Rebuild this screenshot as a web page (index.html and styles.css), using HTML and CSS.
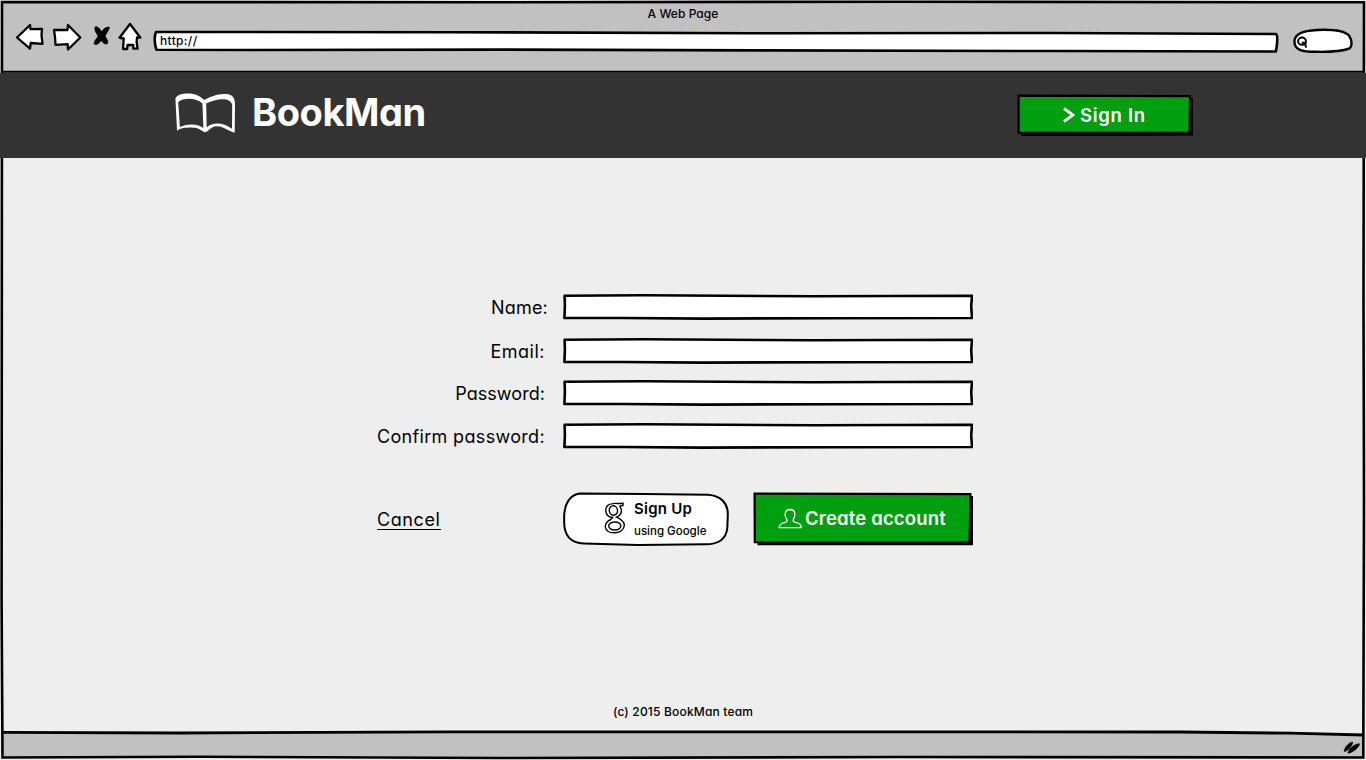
FILE: index.html
```html
<!DOCTYPE html>
<html lang="en">
<head>
<meta charset="utf-8">
<title>BookMan</title>
<link rel="stylesheet" href="styles.css">
</head>
<body>
<svg class="defs" width="0" height="0">
  <symbol id="field" viewBox="0 0 410 26">
    <path d="M1.6 1.7L80 1.3L250 2.2L409 1.8L408.2 12L409 24L270 24.2L140 24.6L60 24L1.4 24L1.9 12Z" fill="#fff" stroke="#000" stroke-width="2.6" stroke-linejoin="round"/>
  </symbol>
</svg>
<div class="browser">
  <svg class="frame" width="1366" height="760" viewBox="0 0 1366 760" fill="none" stroke="#000" stroke-width="3">
    <path d="M2.5 2H1363.5V73H2.5Z" fill="#c1c1c1" stroke="none"/>
    <path d="M2.5 732L700 733L1250 732.5L1363.5 735V757.5H2.5Z" fill="#c1c1c1" stroke="none"/>
    <path d="M2 2L500 2.3L900 1.7L1364 2.3L1363.5 300L1364 500L1363.3 757.5L900 757L500 758L200 756.8L2.5 757.5L1.6 600L1.8 350Z" stroke-width="2.6"/>
    <path d="M2 71.8H1364" stroke-width="2"/>
    <path d="M2 732.3L180 733L450 731.8L1180 732L1290 733.2L1364 735" stroke-width="2.8"/>
  </svg>
  <div class="toolbar">
    <div class="window-title">A Web Page</div>
    <div class="controls">
      <svg class="nav" width="126" height="30" viewBox="0 0 126 30" stroke="#000" stroke-width="2.3" stroke-linejoin="round" fill="#fff">
        <path d="M1 15.5L14 3L14.5 7.2L26 6.8L25.5 13L26.5 21.8L14.7 21L14 26.7Z"/>
        <path d="M38 8L51.5 8L52 3L64.3 15.5L52 27.5L51.7 22.2L39.5 22.8L39 15Z"/>
        <path d="M79.3 5C81.5 4.2 83.8 6.5 85.5 10C87.5 6.8 90 4.8 93.3 5.3C93.5 7 90.5 10.5 89 14.2C90.5 17 92 19 91.7 21C90.5 23 87 21.5 85.3 18.3C83 21.5 80.5 23.3 78.3 22C77.8 19.5 80.5 17 82.3 14.2C80 10.5 78.2 7.5 79.3 5Z" fill="#000" stroke-width="1"/>
        <path d="M114 2L124.3 15.5H121L120.6 20L121.6 26.7H117.3V23H111.6L111.1 27H107.1L107.7 16.5L103.5 15.8Z"/>
      </svg>
      <div class="address">
        <svg class="shape" width="1126" height="23" viewBox="0 0 1126 23"><path d="M3 2L300 2.2L600 3.3L900 3L1123.2 4C1124.7 5.8 1124.7 11.3 1122.9 21.5L900 21L600 20.4L350 19.6L100 20L3.5 19.8C1.5 14.3 1 6.3 3 2Z" fill="#fff" stroke="#000" stroke-width="2.6" stroke-linejoin="round"/></svg>
        <span class="url">http://</span>
      </div>
      <svg class="search" width="60" height="26" viewBox="0 0 60 26" fill="none" stroke="#000" stroke-width="2.4" stroke-linecap="round"><path d="M1.5 13C2 4 14 2 31 1.8C43 1.8 52 3.5 56 7.5C59 12 59.5 18 56.5 20.5C48 23.5 35 24 24 23.8C9 24 1 22 1.5 13Z" fill="#fff"/><ellipse cx="9" cy="13.2" rx="3.9" ry="3.6" stroke-width="2"/><path d="M9.5 14.8C11.5 14.4 13.4 15.5 12.2 16.6L13 18.8" stroke-width="2"/></svg>
    </div>
  </div>
  <header class="site-header">
    <svg class="book" width="62" height="42" viewBox="0 0 62 42" fill="#fff" fill-rule="evenodd"><path d="M.4 5.5C3 .5 9 .3 15 .5C21 .8 26 3.8 29 7C35 4 42 1 49 1C55 1 59.4 2.3 60 10L59.7 39.8C53 38 49 33 41 33.2C36 33.4 34 38.5 30 39.2C26 38.5 25 34.5 16 34.6C10 34.8 6 35 2 37.7L1.5 27ZM3.2 9L4.9 34C13 30.6 22 30.6 28.4 35L27.4 10.4C21 4.6 9 4.4 3.2 9ZM31.2 10.5L31.7 34.4C37 29.1 48 28.6 57 35.8L57.2 12C56.1 4 42 4.9 31.2 10.5Z"/></svg>
    <span class="brand">BookMan</span>
    <button class="button sign-in">
      <svg class="shape" width="177" height="43" viewBox="0 0 177 43"><path d="M4 4H176V41.5L100 42H4Z"/><path d="M1.6 1.6L173 2.2L172.5 38.8L1.6 38.8Z" fill="#009f10" stroke="#000" stroke-width="2.2"/></svg>
      <svg class="chevron" width="12" height="17" viewBox="0 0 12 17"><path d="M1 1.5L10 8L1 14.5" fill="none" stroke="#fff" stroke-width="2.8"/></svg>
      <span class="sign-in-text">Sign In</span>
    </button>
  </header>
  <main class="page">
    <form class="form">
      <div class="row name"><label>Name:</label><svg class="field"><use href="#field"/></svg></div>
      <div class="row email"><label>Email:</label><svg class="field"><use href="#field"/></svg></div>
      <div class="row password"><label>Password:</label><svg class="field"><use href="#field"/></svg></div>
      <div class="row confirm"><label>Confirm password:</label><svg class="field"><use href="#field"/></svg></div>
      <div class="actions">
        <a class="cancel">Cancel</a>
        <button type="button" class="button google">
          <svg class="shape" width="166" height="55" viewBox="0 0 166 55"><path d="M17 1.5L80 2L145 2.7C158 3.5 165 11.5 164.8 22.5L164.3 36C163 48 155 52.5 142 52.3L75 53L21 51.5C8 51 .5 44 1.2 28C.5 12 7 2.5 17 1.5Z" fill="#fff" stroke="#000" stroke-width="2"/></svg>
          <svg class="g" width="22" height="32" viewBox="0 0 22 32" fill="none" stroke="#000" stroke-width="1.4"><path d="M19 1.2C15 2 12 .9 9 1.6C4 2 1.5 5 1.8 9C2 12 4 15 8.5 15.5L6.8 17.5C2.5 19.5 1.2 22 1.3 25C2 29 6 31 11 30.8C17 30.5 20.3 27 20.3 23C20 18.5 16 17 12.5 15.2C17 13 18 10.5 17.2 7L15.8 4.3L19 3.5Z"/><ellipse cx="9.4" cy="8.5" rx="4.1" ry="4.7" transform="rotate(-12 9.4 8.5)"/><ellipse cx="10.8" cy="24" rx="6.1" ry="4"/></svg>
          <span class="google-text"><span class="google-main">Sign Up</span><span class="google-sub">using Google</span></span>
        </button>
        <button type="button" class="button create">
          <svg class="shape" width="220" height="54" viewBox="0 0 220 54"><path d="M4.5 4H220V53.3H4.5Z"/><path d="M1.6 1.6L217.4 2.2L216.6 50L1.8 50.2Z" fill="#009f10" stroke="#000" stroke-width="2.2"/></svg>
          <svg class="user" width="25" height="21" viewBox="0 0 25 21"><path d="M1.2 19.6C1.2 16.5 3 15 7.5 14.3C10 13.3 9.3 12 8 10.2C5.8 5.8 7.5 1.6 12 1.5C16.7 1.6 18 5.8 16 10.2C14.7 12.2 14.5 13.3 17 14.3C21.5 15 23.2 16.5 23.3 19.6Z" fill="none" stroke="#fff" stroke-width="1.3"/></svg>
          <span class="create-text">Create account</span>
        </button>
      </div>
    </form>
    <footer class="copyright">(c) 2015 BookMan team</footer>
  </main>
  <div class="status">
    <svg width="18" height="14" viewBox="0 0 18 14"><path d="M1.3 11.5C.8 8.5 5.5 2.5 9.5 2C10.5 4.5 5 11.5 1.3 11.5ZM4.9 13.2C5.5 9.5 11.5 3.5 16.5 3.8C16.5 7 9.5 13.2 4.9 13.2Z" stroke="#000" stroke-width=".6"/></svg>
  </div>
</div>
</body>
</html>
```

FILE: styles.css
```css
* { box-sizing: border-box; }
body {
  margin: 0;
  background: #eee;
  color: #000;
  font-family: Inter, "Noto Sans", sans-serif;
  font-feature-settings: "cv11" 1;
  overflow: hidden;
}
svg { display: block; flex: none; }
.defs { position: absolute; }
.browser { position: relative; width: 1366px; height: 760px; display: flex; flex-direction: column; }
.frame, .shape { position: absolute; left: 0; top: 0; z-index: -1; }
.toolbar { height: 73px; }
.window-title { height: 22px; padding-top: 6px; text-align: center; font-size: 12px; font-weight: 500; line-height: 16px; letter-spacing: .05px; }
.controls { display: flex; align-items: flex-start; padding-left: 16px; }
.nav { margin-right: 11px; }
.address { position: relative; isolation: isolate; width: 1126px; height: 23px; margin-top: 8px; padding: 3px 0 0 7px; font-size: 12px; font-weight: 500; line-height: 16px; letter-spacing: .35px; }
.search { margin: 6px 0 0 14px; }
.site-header { position: relative; isolation: isolate; height: 85px; background: #333; display: flex; align-items: flex-start; padding-left: 175px; }
.book { margin-top: 20px; }
.brand { flex: none; width: 780px; padding: 14px 0 0 15px; color: #fff; font-size: 38px; font-weight: 700; line-height: 50px; letter-spacing: -.45px; }
.button { position: relative; isolation: isolate; display: flex; border: 0; background: none; padding: 0; margin: 0; color: #fff; font-family: inherit; font-feature-settings: inherit; text-align: left; white-space: nowrap; }
.sign-in { flex: none; width: 177px; height: 43px; margin-top: 21px; padding: 13px 0 0 46px; font-size: 18.5px; font-weight: 600; line-height: 17px; letter-spacing: .7px; }
.sign-in-text { padding-left: 5px; }
.page { height: 575px; display: flex; flex-direction: column; align-items: flex-start; }
.form { width: 596px; height: 541px; margin-left: 377px; padding-top: 136px; }
.row { display: flex; justify-content: flex-end; height: 43px; font-size: 18px; line-height: 28px; letter-spacing: .33px; }
.row.name { height: 44px; }
.row.email { height: 42px; }
.row.email label { letter-spacing: .5px; }
.row.password label { letter-spacing: .05px; }
.row label { white-space: nowrap; padding-right: 18px; }
.row.name label { padding-right: 15px; letter-spacing: .2px; }
.field { width: 410px; height: 26px; }
.actions { display: flex; align-items: flex-start; padding-top: 26px; }
.cancel { width: 64px; height: 25px; margin: 13px 122px 0 0; padding-top: 2px; border-bottom: 1px solid #000; font-size: 18px; line-height: 26px; letter-spacing: .6px; }
.google { width: 166px; height: 55px; margin-right: 24px; padding: 10px 0 0 41px; color: #000; }
.google-text { display: flex; flex-direction: column; padding-left: 8px; }
.google-main { font-size: 15px; font-weight: 600; line-height: 14px; letter-spacing: .25px; }
.google-sub { padding-top: 8px; font-size: 11.5px; line-height: 14px; font-weight: 500; }
.create { width: 220px; height: 54px; padding: 16px 0 0 25px; font-size: 18.5px; font-weight: 600; line-height: 20px; letter-spacing: .17px; }
.create-text { padding-left: 2px; }
.copyright { width: 1366px; text-align: center; font-size: 12px; font-weight: 500; line-height: 25px; letter-spacing: .18px; }
.status { display: flex; justify-content: flex-end; padding: 7px 5px 0 0; }
```
